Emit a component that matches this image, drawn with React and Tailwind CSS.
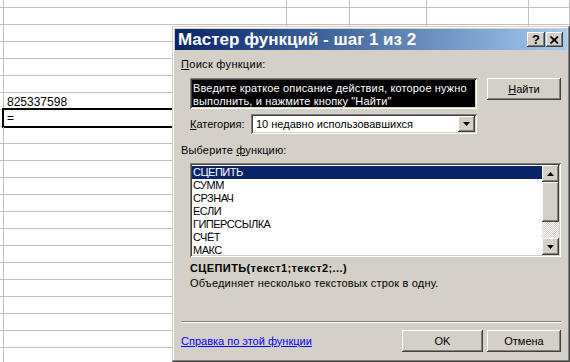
import React from 'react';

const raised =
  'shadow-[inset_-1px_-1px_0_#404040,inset_1px_1px_0_#ffffff,inset_-2px_-2px_0_#808080,inset_2px_2px_0_#d4d0c8]';
const sunken =
  'shadow-[inset_1px_1px_0_#808080,inset_-1px_-1px_0_#ffffff,inset_2px_2px_0_#404040,inset_-2px_-2px_0_#d4d0c8]';
const windowEdge =
  'shadow-[inset_-1px_-1px_0_#404040,inset_1px_1px_0_#d4d0c8,inset_-2px_-2px_0_#808080,inset_2px_2px_0_#ffffff]';

const cols = ['w-[4px]', 'w-[283px]', 'w-[63px]', 'w-[77px]', 'w-[102px]', 'flex-1'];

const functions = ['СЦЕПИТЬ', 'СУММ', 'СРЗНАЧ', 'ЕСЛИ', 'ГИПЕРССЫЛКА', 'СЧЁТ', 'МАКС'];

const Arrow = ({ dir }) => (
  <svg width="7" height="4" viewBox="0 0 7 4">
    {dir === 'up' ? <polygon points="3.5,0 7,4 0,4" fill="#000" /> : <polygon points="0,0 7,0 3.5,4" fill="#000" />}
  </svg>
);

const Sheet = () => {
  const rows = Array.from({ length: 22 }, (_, i) => i);
  return (
    <div className="flex flex-col bg-white">
      {rows.map((r) => (
        <div key={r} className={`flex border-b border-[#c0c0c0] ${r === 0 ? 'h-[8px]' : 'h-[17px]'}`}>
          {cols.map((c, j) => (
            <div key={j} className={`${c} relative border-r border-[#c0c0c0] shrink-0`}>
              {r === 6 && j === 1 && (
                <div className="pl-[3px] pt-[1px] text-[12px] leading-[16px] text-black">825337598</div>
              )}
              {r === 7 && j === 1 && (
                <>
                  <div className="pl-[3px] text-[12px] leading-[16px] text-black">=</div>
                  <div className="absolute -top-[2px] -left-[2px] -right-[1px] h-[20px] border-2 border-black" />
                </>
              )}
            </div>
          ))}
        </div>
      ))}
    </div>
  );
};

const Button = ({ children, className = '' }) => (
  <div className={`flex items-center justify-center h-[22px] bg-[#d4d0c8] text-black ${raised} ${className}`}>
    {children}
  </div>
);

const Dialog = () => (
  <div className={`absolute left-[172px] top-[26px] w-[398px] h-[336px] bg-[#d4d0c8] p-[3px] ${windowEdge}`}>
    <div className="flex items-center justify-between h-[21px] pl-[3px] pr-[4px] bg-linear-to-r from-[#0a246a] via-[#5a7fb0] via-55% to-[#a6caf0]">
      <span className="text-white font-bold text-[17px] leading-[21px]">Мастер функций - шаг 1 из 2</span>
      <div className="flex gap-[1px]">
        <div className={`flex items-center justify-center w-[18px] h-[15px] bg-[#d4d0c8] ${raised}`}>
          <span className="text-black font-bold text-[13px] leading-[13px]">?</span>
        </div>
        <div className={`flex items-center justify-center w-[17px] h-[15px] bg-[#d4d0c8] ${raised}`}>
          <svg width="9" height="8" viewBox="0 0 9 8">
            <path d="M0.5 0.5 L8 7.5 M8 0.5 L0.5 7.5" stroke="#000" strokeWidth="1.8" />
          </svg>
        </div>
      </div>
    </div>

    <div className="flex flex-col px-[6px] text-[11px] leading-[13px] text-black">
      <div className="mt-[8px] tracking-[0.3px]">
        <u>П</u>оиск функции:
      </div>

      <div className="flex mt-[7px] ml-[9px] gap-[10px] items-start">
        <div className={`w-[287px] h-[31px] bg-black p-[2px] ${sunken}`}>
          <div className="pt-[2px] pl-[1px] text-white tracking-[0.15px] whitespace-nowrap">
            Введите краткое описание действия, которое нужно
            <br />
            выполнить, и нажмите кнопку "Найти"
          </div>
        </div>
        <Button className="w-[74px]">
          <span>
            <u>Н</u>айти
          </span>
        </Button>
      </div>

      <div className="flex items-center mt-[5px] ml-[9px]">
        <div className="w-[61px]">
          <u>К</u>атегория:
        </div>
        <div className={`flex items-center w-[226px] h-[20px] bg-white p-[2px] ${sunken}`}>
          <div className="flex-1 pl-[3px]">10 недавно использовавшихся</div>
          <div className={`flex items-center justify-center w-[17px] h-[16px] bg-[#d4d0c8] ${raised}`}>
            <Arrow dir="down" />
          </div>
        </div>
      </div>

      <div className="mt-[10px] tracking-[0.15px]">
        Выберите <u>ф</u>ункцию:
      </div>

      <div className={`flex mt-[6px] ml-[9px] h-[94px] bg-white p-[2px] ${sunken}`}>
        <div className="flex-1 flex flex-col pt-[1px]">
          {functions.map((f, i) => (
            <div
              key={f}
              className={`h-[13px] pl-[1px] tracking-[-0.5px] ${i === 0 ? 'bg-[#0a246a] text-white' : 'text-black'}`}
            >
              {f}
            </div>
          ))}
        </div>
        <div className="flex flex-col w-[17px]">
          <div className={`flex items-center justify-center h-[17px] bg-[#d4d0c8] ${raised}`}>
            <Arrow dir="up" />
          </div>
          <div className={`h-[40px] bg-[#d4d0c8] ${raised}`} />
          <div className="h-[16px] bg-[image:repeating-conic-gradient(#d4d0c8_0_25%,#ffffff_0_50%)] bg-[length:2px_2px]" />
          <div className={`flex items-center justify-center h-[17px] bg-[#d4d0c8] ${raised}`}>
            <Arrow dir="down" />
          </div>
        </div>
      </div>

      <div className="mt-[5px] ml-[9px] font-bold tracking-[0.4px]">СЦЕПИТЬ(текст1;текст2;...)</div>
      <div className="mt-[2px] ml-[9px] tracking-[0.18px]">Объединяет несколько текстовых строк в одну.</div>

      <div className="mt-[31px] border-t border-t-[#808080] border-b border-b-white" />

      <div className="flex items-center justify-between mt-[7px]">
        <span className="text-[#0000ff] underline">Справка по этой функции</span>
        <div className="flex gap-[4px]">
          <Button className="w-[81px]">OK</Button>
          <Button className="w-[74px]">Отмена</Button>
        </div>
      </div>
    </div>
  </div>
);

export default function App() {
  return (
    <div className="relative w-[570px] h-[362px] overflow-hidden bg-white font-['Liberation_Sans',Arial,sans-serif]">
      <Sheet />
      <Dialog />
    </div>
  );
}
